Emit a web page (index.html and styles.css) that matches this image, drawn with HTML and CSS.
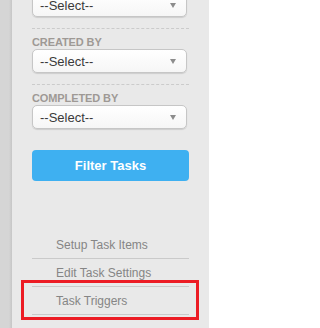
FILE: index.html
```html
<!DOCTYPE html>
<html>
<head>
<meta charset="utf-8">
<link rel="stylesheet" href="styles.css">
</head>
<body>
<div class="layout">
  <div class="strip"></div>
  <aside class="panel">
    <div class="filters">
      <div class="select"><span>--Select--</span><i class="caret"></i></div>
      <hr class="dash">
      <div class="label">CREATED BY</div>
      <div class="select"><span>--Select--</span><i class="caret"></i></div>
      <hr class="dash">
      <div class="label">COMPLETED BY</div>
      <div class="select"><span>--Select--</span><i class="caret"></i></div>
      <button class="filter-btn">Filter Tasks</button>
    </div>
    <ul class="links">
      <li><a>Setup Task Items</a></li>
      <li><a>Edit Task Settings</a></li>
      <li><a>Task Triggers</a></li>
    </ul>
    <div class="highlight"></div>
  </aside>
  <div class="main"></div>
</div>
</body>
</html>
```
FILE: styles.css
```css
html, body {
  margin: 0;
  padding: 0;
  background: #fff;
  font-family: "Liberation Sans", Arial, sans-serif;
}
.layout {
  display: flex;
  height: 328px;
  overflow: hidden;
}
.strip {
  width: 12px;
  flex: none;
  background: linear-gradient(to right, #d5d5d5 0, #d5d5d5 9px, #cbcbcb 11px, #c6c6c6 12px);
}
.panel {
  position: relative;
  width: 197px;
  flex: none;
  background: #e9e9e9;
}
.main {
  flex: 1;
  background: #fff;
}
.filters {
  display: flex;
  flex-direction: column;
  margin: -7px 0 0 20px;
  width: 157px;
}
.select {
  box-sizing: border-box;
  width: 155px;
  height: 24px;
  border: 1px solid #c6c6c6;
  border-radius: 5px;
  background: linear-gradient(#ffffff, #f6f6f6);
  box-shadow: 0 1px 1px rgba(0, 0, 0, 0.12);
  display: flex;
  align-items: center;
  justify-content: space-between;
  padding: 0 10px 0 7px;
  color: #3a3a3a;
  font-size: 13px;
}
.caret {
  width: 0;
  height: 0;
  border-left: 3px solid transparent;
  border-right: 3px solid transparent;
  border-top: 5px solid #8c8c8c;
}
.dash {
  margin: 11px 0 0 0;
  border: 0;
  border-top: 1px dashed #cbcbcb;
  height: 0;
  width: 157px;
}
.label {
  margin-top: 7px;
  font-size: 11px;
  font-weight: bold;
  line-height: 13px;
  color: #9e9995;
  letter-spacing: -0.1px;
}
.filter-btn {
  margin-top: 21px;
  height: 31px;
  width: 157px;
  border: 0;
  border-radius: 4px;
  background: #3eb0f1;
  color: #fff;
  font-family: "Liberation Sans", Arial, sans-serif;
  font-weight: bold;
  font-size: 13px;
  padding: 0;
}
.links {
  list-style: none;
  margin: 50px 0 0 20px;
  padding: 0;
  width: 157px;
}
.links li {
  height: 27px;
  border-bottom: 1px solid #cacaca;
  display: flex;
  align-items: center;
}
.links a {
  padding-left: 24px;
  font-size: 12px;
  color: #858585;
}
.highlight {
  position: absolute;
  left: 9px;
  top: 280px;
  width: 178px;
  height: 40px;
  box-sizing: border-box;
  border: 3px solid #ec1c24;
}
```
